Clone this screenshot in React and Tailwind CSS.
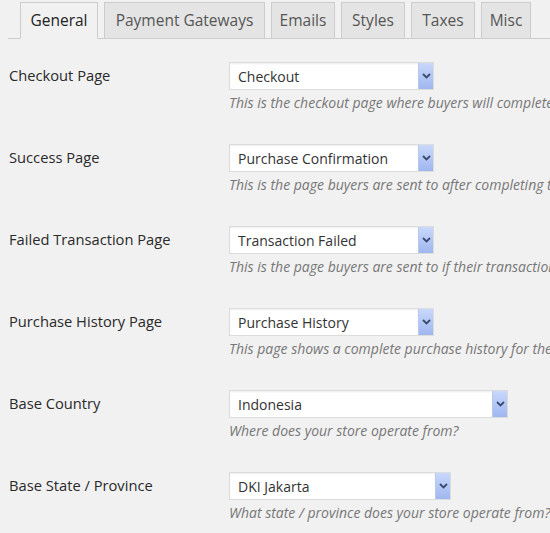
const tabs = [
  { name: 'General', w: 'w-[78px]' },
  { name: 'Payment Gateways', w: 'w-[161px]' },
  { name: 'Emails', w: 'w-[64px]' },
  { name: 'Styles', w: 'w-[64px]' },
  { name: 'Taxes', w: 'w-[64px]' },
  { name: 'Misc', w: 'w-[50px]' },
]

const rows = [
  {
    label: 'Checkout Page',
    value: 'Checkout',
    width: 'w-[205px]',
    desc: 'This is the checkout page where buyers will complete their order',
  },
  {
    label: 'Success Page',
    value: 'Purchase Confirmation',
    width: 'w-[205px]',
    desc: 'This is the page buyers are sent to after completing their purchases',
  },
  {
    label: 'Failed Transaction Page',
    value: 'Transaction Failed',
    width: 'w-[205px]',
    desc: 'This is the page buyers are sent to if their transaction is cancelled',
  },
  {
    label: 'Purchase History Page',
    value: 'Purchase History',
    width: 'w-[205px]',
    desc: 'This page shows a complete purchase history for the current user',
  },
  {
    label: 'Base Country',
    value: 'Indonesia',
    width: 'w-[279px]',
    desc: 'Where does your store operate from?',
  },
  {
    label: 'Base State / Province',
    value: 'DKI Jakarta',
    width: 'w-[222px]',
    desc: 'What state / province does your store operate from?',
  },
]

function Select({ value, width }) {
  return (
    <div
      className={`${width} h-[28px] flex items-center bg-white border border-[#dcdcdc] shadow-[inset_0_1px_2px_rgba(0,0,0,0.07)]`}
    >
      <span className="flex-1 pl-[8px] text-[14px] text-[#333] whitespace-nowrap overflow-hidden">
        {value}
      </span>
      <span className="w-[15px] h-[26px] flex items-center justify-center bg-gradient-to-b from-[#c9d8fb] to-[#9fb7ef] border-l border-[#b7c7ee]">
        <svg width="9" height="6" viewBox="0 0 9 6">
          <path d="M1 1 L4.5 4.5 L8 1" fill="none" stroke="#3a4a70" strokeWidth="1.8" />
        </svg>
      </span>
    </div>
  )
}

export default function App() {
  return (
    <div
      className="w-[550px] h-[533px] overflow-hidden bg-[#f1f1f1]"
      style={{ fontFamily: '"Open Sans", "Liberation Sans", sans-serif' }}
    >
      {/* tabs */}
      <div className="ml-[8px] h-[39px] pt-[2px] pl-[12px] flex items-end gap-[6px] border-b border-[#ccc]">
        {tabs.map((t, i) => (
          <div
            key={t.name}
            className={
              i === 0
                ? `${t.w} h-[37px] flex items-center justify-center whitespace-nowrap text-[15.5px] text-[#222] bg-[#f1f1f1] border border-[#ccc] border-b-[#f1f1f1] -mb-px`
                : `${t.w} h-[36px] flex items-center justify-center whitespace-nowrap text-[15.5px] text-[#555] bg-[#e4e4e4] border border-b-0 border-[#ccc]`
            }
          >
            {t.name}
          </div>
        ))}
      </div>

      {/* settings */}
      <div className="pt-[23px]">
        {rows.map((r) => (
          <div key={r.label} className="flex pb-[31px]">
            <div className="w-[229px] shrink-0 pl-[9px] pt-[3px] text-[14.7px] leading-5 text-[#2a2a2a]">
              {r.label}
            </div>
            <div className="flex-1 min-w-0 overflow-hidden">
              <Select value={r.value} width={r.width} />
              <p className="mt-[3px] text-[14px] leading-5 italic text-[#777] whitespace-nowrap">
                {r.desc}
              </p>
            </div>
          </div>
        ))}
      </div>
    </div>
  )
}
